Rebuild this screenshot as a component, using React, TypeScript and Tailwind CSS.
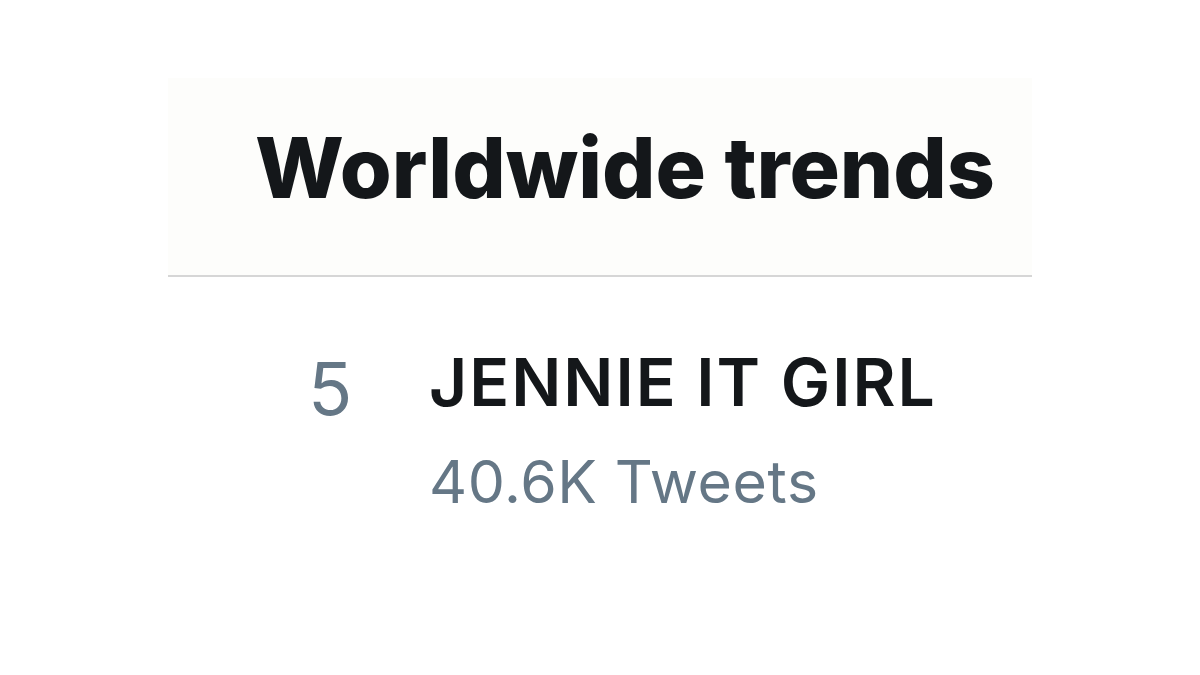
import React from 'react';

const App: React.FC = () => {
    return (
        <div className="w-[1200px] h-[675px] bg-white overflow-hidden" style={{ fontFamily: 'Inter, "Liberation Sans", sans-serif' }}>
            <div className="ml-[168px] w-[864px] pt-[78px]">
                {/* header */}
                <div className="bg-[#fdfdfb] border-b-2 border-[#d6d6d6] pl-[87px] pt-[48px] pb-[65px]">
                    <h1 className="text-[84px] leading-none font-extrabold text-[#14171a]">Worldwide trends</h1>
                </div>
                {/* trend row */}
                <div className="flex flex-row pt-[72px] pl-[140px]">
                    <div className="w-[121px] mt-[3px] text-[73px] leading-none text-[#657786]">5</div>
                    <div className="flex flex-col">
                        <p className="text-[66px] leading-none font-semibold tracking-[2px] text-[#14171a]">JENNIE IT GIRL</p>
                        <p className="mt-[37px] text-[59px] leading-none tracking-[0.6px] text-[#657786]">40.6K Tweets</p>
                    </div>
                </div>
            </div>
        </div>
    );
};

export default App;
